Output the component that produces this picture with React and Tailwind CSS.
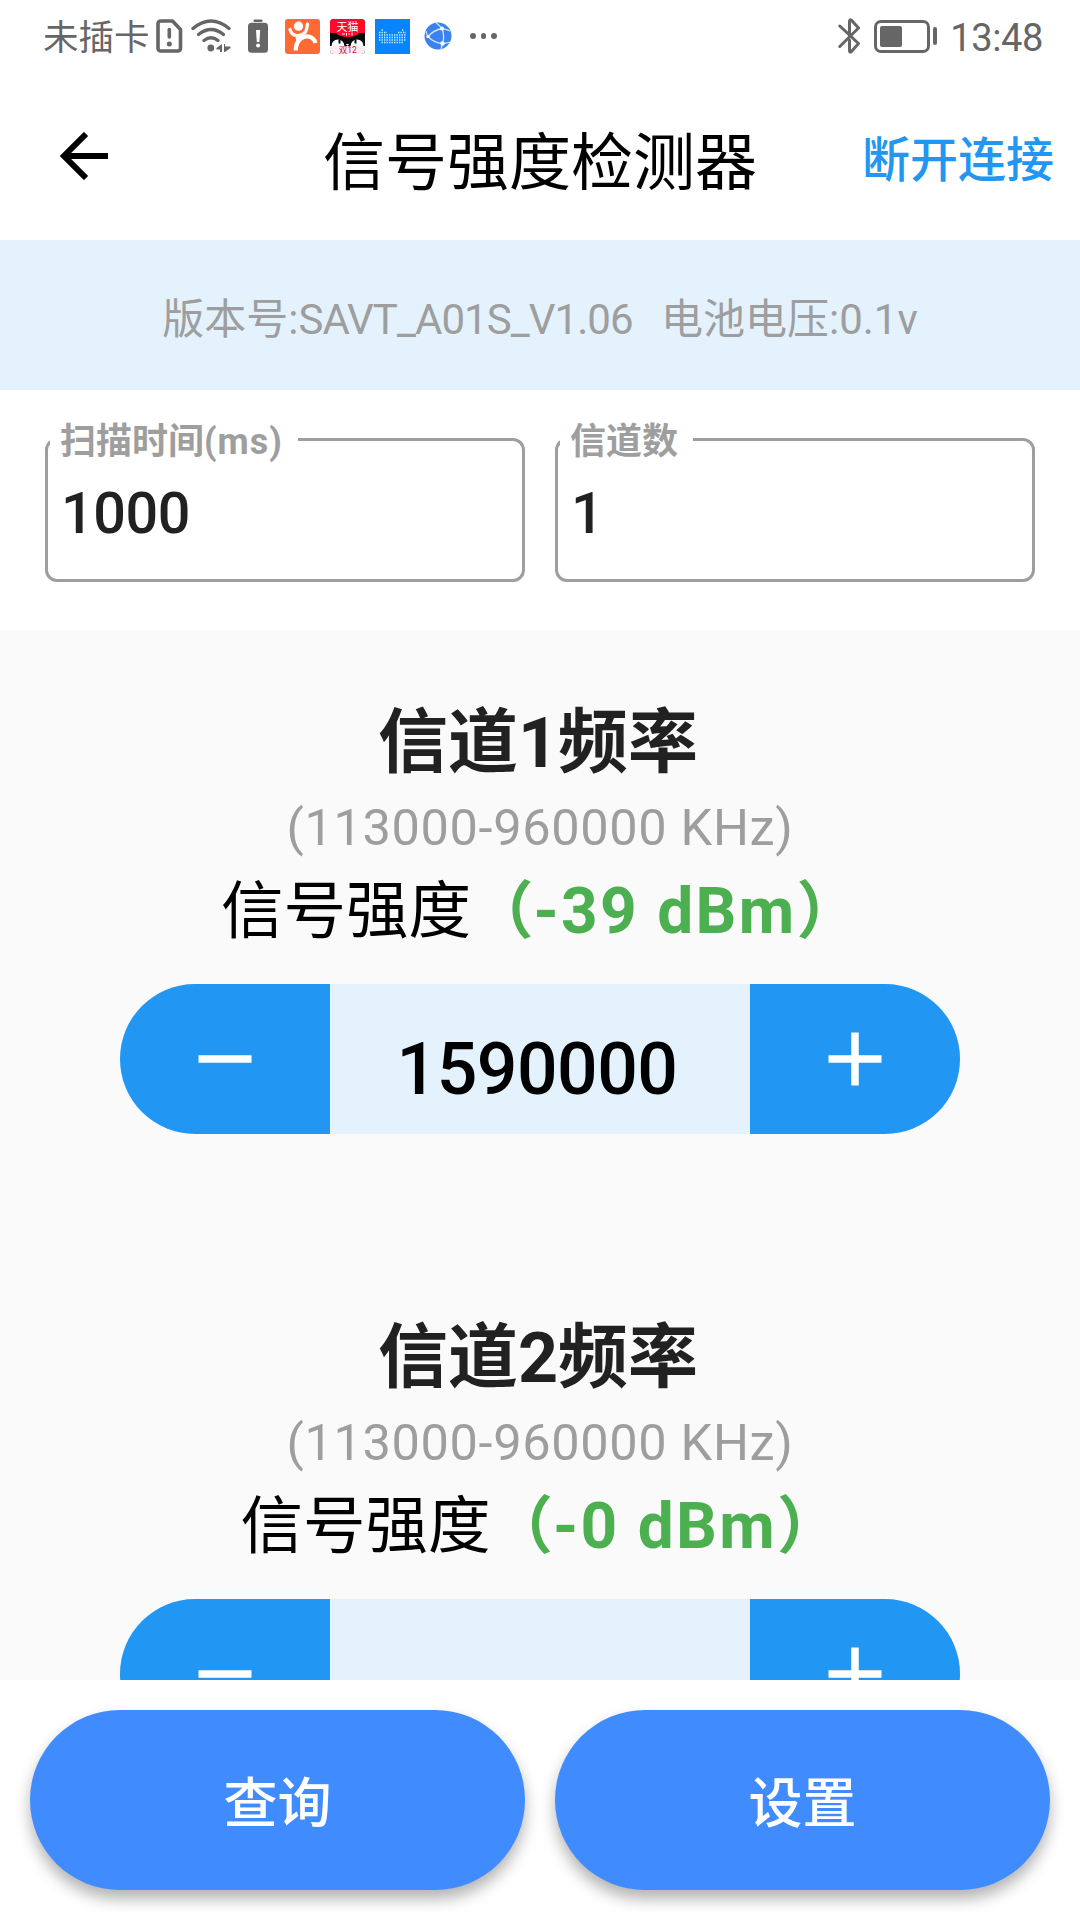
import { useState } from "react"

const channels = [
  { id: 1, level: "-39 dBm", frequency: "1590000" },
  { id: 2, level: "-0 dBm", frequency: "" },
]

function SimIcon() {
  return (
    <svg className="ml-[7px] h-[34px] w-[27px]" viewBox="0 0 27 34" fill="none">
      <path
        d="M5 2H16.5L24.5 10.5V29Q24.5 32 21.5 32H5Q2 32 2 29V5Q2 2 5 2Z"
        stroke="#666"
        strokeWidth="3.6"
        strokeLinejoin="round"
      />
      <path d="M13.3 10.5V18" stroke="#666" strokeWidth="3.6" strokeLinecap="round" />
      <circle cx="13.3" cy="25" r="2.5" fill="#666" />
    </svg>
  )
}

function WifiIcon() {
  return (
    <svg className="ml-[8px] h-[34px] w-[41px]" viewBox="0 0 41 34" fill="none">
      <g stroke="#666" strokeWidth="3.4" strokeLinecap="round">
        <path d="M2 9.5Q20-5.5 38 9.5" />
        <path d="M7.500 15.5Q20 5.500 32.500 15.5" />
        <path d="M13 21.5Q20 16 27 21.5" />
      </g>
      <circle cx="19.800" cy="29" r="3.4" fill="#666" />
      <path d="M31 25V33H29V30.5H25.500V29L31 25ZM34 25V27.500H39.500V29L34 33H33V25Z" fill="#666" />
    </svg>
  )
}

function LowBatteryIcon() {
  return (
    <svg className="ml-[16px] h-[34px] w-[20px]" viewBox="0 0 20 34">
      <rect x="5.5" y="0.5" width="9" height="2.4" rx="1" fill="#666" />
      <rect x="0" y="3.8" width="20" height="30" rx="3.5" fill="#666" />
      <path d="M8 11H12.2L11.4 23H8.8Z" fill="#fff" />
      <circle cx="10.1" cy="26.6" r="2" fill="#fff" />
    </svg>
  )
}

function DianpingIcon() {
  return (
    <svg className="ml-[17px] size-[35px]" viewBox="0 0 35 35" fill="none">
      <rect width="35" height="35" rx="3" fill="#ff6a33" />
      <circle cx="13.5" cy="7.2" r="4.6" fill="#fff" />
      <path d="M5 10.5Q6.5 16.5 12 16.5Q17.5 17 20.5 13Q22 10.5 22.5 5" stroke="#fff" strokeWidth="3.2" strokeLinecap="round" />
      <path d="M10.8 31.5Q10.5 25 15 20Q21.5 15.5 26.5 18.5Q29.5 20.5 30.5 24" stroke="#fff" strokeWidth="4.2" />
      <path d="M10 15.5L20 14L18 20L12 25Z" fill="#fff" />
    </svg>
  )
}

function TmallIcon() {
  return (
    <svg className="ml-[10px] size-[35px]" viewBox="0 0 35 35">
      <defs>
        <clipPath id="tmall">
          <rect width="35" height="35" rx="4" />
        </clipPath>
      </defs>
      <g clipPath="url(#tmall)">
        <rect width="35" height="35" fill="#0a0a0a" />
        <path d="M0 0H35V14H29Q26 18 17.5 18Q9 18 6 14H0Z" fill="#ff0a2d" />
        <path d="M0 27H35V35H0Z" fill="#fbeef2" />
        <path d="M1.5 27Q2 20.5 8 20.5Q13.500 20.5 14.500 27ZM20.5 27Q21.500 20.5 27 20.5Q33 20.5 33.500 27Z" fill="#fff" />
        <path d="M9.500 20.500V24.500M25.500 20.500V24.500" stroke="#0a0a0a" strokeWidth="2" />
        <path d="M15.8 25H19.2L17.5 26.8Z" fill="#fff" />
        <text x="17.5" y="11.5" textAnchor="middle" fontSize="11" fill="#fff" className="font-['Noto_Sans_CJK_SC',sans-serif]">天猫</text>
        <path d="M12 15H15M16.5 14V16.5M18.5 15H20M22 13.5V16.5" stroke="#fff" strokeWidth="1" />
        <text x="17.7" y="34" textAnchor="middle" fontSize="8.5" fill="#c8102e" className="font-['Roboto','Noto_Sans_CJK_SC',sans-serif]">双12</text>
      </g>
    </svg>
  )
}

function DotGridIcon() {
  return (
    <svg className="ml-[10px] size-[35px]" viewBox="0 0 35 35" fill="none">
      <rect width="35" height="35" fill="#0884ff" />
      <g stroke="#c4f1f8" strokeWidth="1.4" strokeDasharray="1.4 1.1">
        <path d="M6.5 11H8M27 11H29" />
        <path d="M4 13.5H12M23 13.5H31" />
        <path d="M4 16H31" />
        <path d="M4 18.5H31" />
        <path d="M4 21H31" />
        <path d="M6.5 23.5H29" />
      </g>
    </svg>
  )
}

function BrowserIcon() {
  return (
    <svg className="ml-[14px] size-[28px]" viewBox="0 0 28 28" fill="none">
      <circle cx="14" cy="14" r="13.5" fill="#3b82ef" />
      <g stroke="#cfe3ff" strokeWidth="1.3">
        <path d="M12 0.800Q15 3 18 6.5Q23 7.500 26 9" />
        <path d="M18 6.5Q21 14 18.5 21.5L17 27" />
        <path d="M4 14.5Q9 8.500 18 6.5M4 14.5Q10 21 18.500 21.5Q22 21.5 26 20" />
        <path d="M4 14.5Q2.500 12 2 9" />
      </g>
      <circle cx="18" cy="6.5" r="2" fill="#fff" />
      <circle cx="4" cy="14.5" r="1.6" fill="#fff" />
      <circle cx="18.5" cy="21.5" r="2.2" fill="#fff" />
    </svg>
  )
}

function BluetoothIcon() {
  return (
    <svg className="h-[36px] w-[23px]" viewBox="0 0 23 36" fill="none" stroke="#666" strokeWidth="3" strokeLinecap="round" strokeLinejoin="round">
      <path d="M1.8 8L20.5 25.5L13 34Q11.5 34.5 11.5 32.5V22" />
      <path d="M1.8 28.5L20.5 10L13.5 2.2Q11.5 1 11.5 3.5V16" />
    </svg>
  )
}

function StatusBar() {
  return (
    <div className="flex h-[72px] items-center justify-between pr-[37px] pl-[43px] text-[#666]">
      <div className="flex items-center">
        <span className="w-[106px] pt-[3px] text-[35.5px] leading-[40px] whitespace-nowrap">未插卡</span>
        <SimIcon />
        <WifiIcon />
        <LowBatteryIcon />
        <DianpingIcon />
        <TmallIcon />
        <DotGridIcon />
        <BrowserIcon />
        <div className="ml-[18px] flex gap-[5px]">
          <span className="size-[5.5px] rounded-full bg-[#666]" />
          <span className="size-[5.5px] rounded-full bg-[#666]" />
          <span className="size-[5.5px] rounded-full bg-[#666]" />
        </div>
      </div>
      <div className="flex items-center">
        <BluetoothIcon />
        <div className="ml-[13px] h-[33px] w-[56px] rounded-[7px] border-3 border-[#666] p-[3px]">
          <div className="h-[21px] w-[22px] rounded-[2px] bg-[#666]" />
        </div>
        <span className="ml-[3px] h-[18px] w-[4px] rounded-full bg-[#666]" />
        <span className="ml-[13px] pt-[3px] text-[38px] leading-[40px] tracking-[-0.4px]">13:48</span>
      </div>
    </div>
  )
}

function Field({ label, unit, value, onChange }) {
  return (
    <div className="relative h-[144px] w-[480px] rounded-[12px] border-3 border-[#9e9e9e]">
      <label className="absolute -top-[19px] left-[2px] bg-white pr-[15px] pl-[10px] text-[36px] leading-[40px] font-bold text-[#9e9e9e]">
        {label}
        {unit && <span className="tracking-[1px]">({unit})</span>}
      </label>
      <input
        className="h-full w-full bg-transparent pt-[6px] pl-[13px] text-[57.5px] font-medium tracking-[-0.4px] text-[#212121] outline-none"
        value={value}
        onChange={(e) => onChange(e.target.value)}
      />
    </div>
  )
}

function Channel({ id, level, frequency }) {
  return (
    <div className="mb-[182px] flex shrink-0 flex-col items-center">
      <h2 className="pr-[4px] text-[70px] leading-[84px] font-bold text-[#212121]">信道{id}频率</h2>
      <p className="mt-[13px] text-[50.5px] leading-[60px] tracking-[0.65px] text-[#9e9e9e]">(113000-960000 KHz)</p>
      <p className="mt-[18px] text-[62.5px] leading-[72px] whitespace-nowrap text-black">
        信号强度
        <span className="font-bold text-[#4caf50]">
          （<span className="text-[64px] leading-none tracking-[2.3px]">{level}</span>）
        </span>
      </p>
      <div className="mt-[36px] flex h-[150px] w-[840px] overflow-hidden rounded-full">
        <button className="flex w-[210px] items-center justify-center bg-[#2196f3]">
          <svg className="size-[54px]" viewBox="0 0 54 54" stroke="#fff" strokeWidth="7.5">
            <path d="M0.5 27H53.5" />
          </svg>
        </button>
        <div className="flex w-[420px] items-center justify-center bg-[#e3f2fd] pt-[22px] pr-[6px] text-[71.5px] leading-[80px] font-medium tracking-[-0.5px] text-black">
          {frequency}
        </div>
        <button className="flex w-[210px] items-center justify-center bg-[#2196f3]">
          <svg className="size-[54px]" viewBox="0 0 54 54" stroke="#fff" strokeWidth="7.5">
            <path d="M0.5 27H53.5M27 0.5V53.5" />
          </svg>
        </button>
      </div>
    </div>
  )
}

export default function App() {
  const [scanTime, setScanTime] = useState("1000")
  const [channelCount, setChannelCount] = useState("1")

  return (
    <div className="flex h-[1920px] w-[1080px] flex-col overflow-hidden bg-white font-['Roboto','Noto_Sans_CJK_SC',sans-serif]">
      <StatusBar />

      <header className="grid h-[168px] grid-cols-[300px_480px_300px] items-center">
        <svg className="ml-[60px] size-[48px]" viewBox="0 0 48 48" fill="none" stroke="#000" strokeWidth="6">
          <path d="M48 24H4M26 2L4 24L26 46" />
        </svg>
        <h1 className="pt-[15px] text-center text-[62px] leading-[72px] whitespace-nowrap text-black">信号强度检测器</h1>
        <button className="pt-[10px] pr-[26px] text-right text-[48px] leading-[60px] font-medium text-[#2196f3]">断开连接</button>
      </header>

      <div className="flex h-[150px] items-center justify-center bg-[#e3f2fd] pt-[9px] text-[42px] leading-[50px] whitespace-pre text-[#9e9e9e]">
        <span>版本号:</span>
        <span className="tracking-[-0.95px]">{"SAVT_A01S_V1.06   "}</span>
        <span>电池电压:0.1v</span>
      </div>

      <div className="flex h-[240px] justify-center gap-[30px] pt-[48px]">
        <Field label="扫描时间" unit="ms" value={scanTime} onChange={setScanTime} />
        <Field label="信道数" value={channelCount} onChange={setChannelCount} />
      </div>

      <main className="flex h-[1050px] flex-col overflow-hidden bg-[#fafafa] pt-[71px]">
        {channels.map((channel) => (
          <Channel key={channel.id} {...channel} />
        ))}
      </main>

      <footer className="flex h-[240px] gap-[30px] p-[30px]">
        {["查询", "设置"].map((text) => (
          <button
            key={text}
            className="h-[180px] flex-1 rounded-full bg-[#408cff] pt-[9px] text-[54px] leading-[60px] font-medium text-white shadow-[0_9px_15px_rgba(0,0,0,0.3)]"
          >
            {text}
          </button>
        ))}
      </footer>
    </div>
  )
}
